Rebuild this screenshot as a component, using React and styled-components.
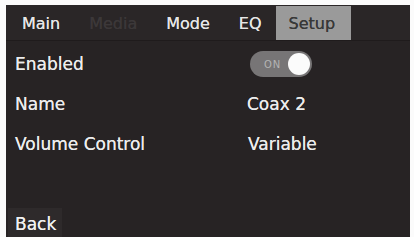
import React from "react";
import styled, { createGlobalStyle } from "styled-components";

const Global = createGlobalStyle`
  html, body { margin: 0; padding: 0; background: #ffffff; }
  body { width: 414px; height: 237px; overflow: hidden; }
`;

const Frame = styled.div`
  width: 414px;
  height: 237px;
  box-sizing: border-box;
  padding: 5px 4px 0 6px;
  background: #fbfbfb;
`;

const Screen = styled.div`
  height: 100%;
  background: #272324;
  display: flex;
  flex-direction: column;
  font-family: "DejaVu Sans", sans-serif;
  font-size: 17px;
  color: #ececec;
`;

const TabBar = styled.div`
  height: 35px;
  display: flex;
  align-items: stretch;
  padding-left: 1px;
  background: #2a2627;
  border-bottom: 1px solid #1f1b1c;
  font-size: 16px;
`;

const Tab = styled.div`
  display: flex;
  align-items: center;
  padding: 1px ${(p) => (p.$active ? "16px" : "14px")} 0 ${(p) => (p.$active ? "13px" : "15px")};
  margin-top: ${(p) => (p.$active ? "1px" : "0")};
  background: ${(p) => (p.$active ? "#9a9a9a" : "transparent")};
  color: ${(p) => (p.$active ? "#383838" : p.$disabled ? "#3c3839" : "#e6e6e6")};
  text-shadow: 0 0 0.6px currentColor;
`;

const Body = styled.div`
  flex: 1;
  display: flex;
  flex-direction: column;
  padding-top: 3px;
`;

const Row = styled.div`
  height: 40px;
  display: grid;
  grid-template-columns: 232px 1fr;
  align-items: center;
  padding-left: 9px;
  text-shadow: 0 0 0.6px currentColor;
`;

const Value = styled.div`
  padding-left: ${(p) => p.$indent || 0}px;
`;

const Toggle = styled.div`
  width: 62px;
  height: 26px;
  margin-left: 3px;
  border-radius: 13px;
  background: #777576;
  display: flex;
  align-items: center;
  justify-content: space-between;
  padding: 0 2px 0 14px;
  box-sizing: border-box;
  text-shadow: none;
`;

const ToggleText = styled.span`
  font-size: 10px;
  letter-spacing: 1px;
  color: #b4b4b4;
`;

const Knob = styled.span`
  width: 22px;
  height: 22px;
  border-radius: 50%;
  background: #fbfbfb;
`;

const Footer = styled.div`
  margin-top: auto;
  display: flex;
`;

const BackButton = styled.div`
  margin-left: 2px;
  width: 54px;
  height: 29px;
  background: #2e2a2b;
  display: flex;
  align-items: center;
  padding-left: 7px;
  padding-top: 2px;
  box-sizing: border-box;
  color: #f0f0f0;
  text-shadow: 0 0 0.6px currentColor;
`;

export default function App() {
  return (
    <>
      <Global />
      <Frame>
        <Screen>
          <TabBar>
            <Tab>Main</Tab>
            <Tab $disabled>Media</Tab>
            <Tab>Mode</Tab>
            <Tab>EQ</Tab>
            <Tab $active>Setup</Tab>
          </TabBar>
          <Body>
            <Row>
              <span>Enabled</span>
              <Toggle>
                <ToggleText>ON</ToggleText>
                <Knob />
              </Toggle>
            </Row>
            <Row>
              <span>Name</span>
              <Value>Coax 2</Value>
            </Row>
            <Row>
              <span>Volume Control</span>
              <Value $indent={1}>Variable</Value>
            </Row>
            <Footer>
              <BackButton>Back</BackButton>
            </Footer>
          </Body>
        </Screen>
      </Frame>
    </>
  );
}
